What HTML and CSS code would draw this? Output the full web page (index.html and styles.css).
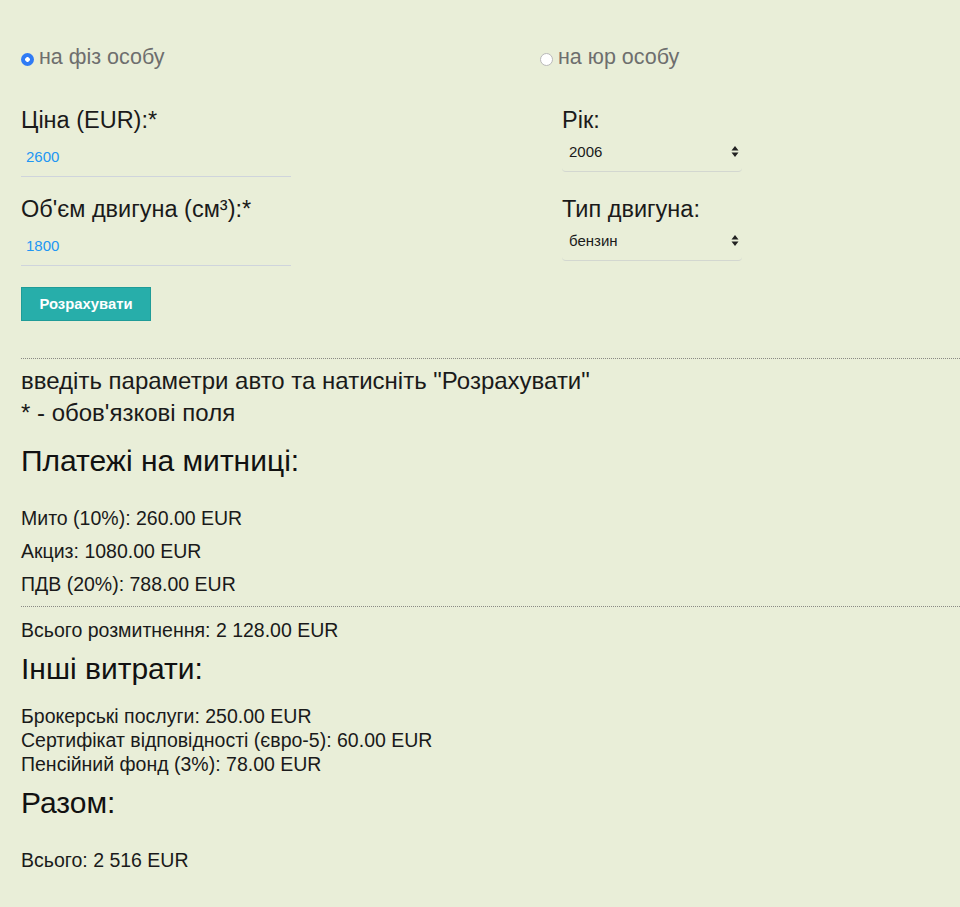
FILE: index.html
```html
<!DOCTYPE html>
<html lang="uk">
<head>
<meta charset="utf-8">
<title>Розмитнення авто</title>
<link rel="stylesheet" href="styles.css">
</head>
<body>
<div class="page">
  <div class="form-grid">
    <label class="radio"><input type="radio" name="who" checked><span>на фіз особу</span></label>
    <label class="radio"><input type="radio" name="who"><span>на юр особу</span></label>

    <div class="field">
      <div class="label">Ціна (EUR):*</div>
      <input class="text-input" type="text" value="2600">
    </div>
    <div class="field right">
      <div class="label">Рік:</div>
      <div class="select"><span>2006</span><span class="arrows"><svg width="8" height="13" viewBox="0 0 8 13"><path d="M4 1 L7.5 5.5 H0.5 Z M4 12 L0.5 7.5 H7.5 Z" fill="#222"/></svg></span></div>
    </div>

    <div class="field">
      <div class="label">Об'єм двигуна (см³):*</div>
      <input class="text-input" type="text" value="1800">
    </div>
    <div class="field right">
      <div class="label">Тип двигуна:</div>
      <div class="select"><span>бензин</span><span class="arrows"><svg width="8" height="13" viewBox="0 0 8 13"><path d="M4 1 L7.5 5.5 H0.5 Z M4 12 L0.5 7.5 H7.5 Z" fill="#222"/></svg></span></div>
    </div>
  </div>

  <button class="btn" type="button">Розрахувати</button>

  <div class="dotted first"></div>
  <p class="hint">введіть параметри авто та натисніть "Розрахувати"</p>
  <p class="hint">* - обов'язкові поля</p>

  <h2 class="h h-customs">Платежі на митниці:</h2>
  <div class="item">Мито (10%): 260.00 EUR</div>
  <div class="item">Акциз: 1080.00 EUR</div>
  <div class="item">ПДВ (20%): 788.00 EUR</div>
  <div class="dotted second"></div>
  <div class="line total-customs">Всього розмитнення: 2 128.00 EUR</div>

  <h2 class="h h-other">Інші витрати:</h2>
  <div class="line">Брокерські послуги: 250.00 EUR</div>
  <div class="line">Сертифікат відповідності (євро-5): 60.00 EUR</div>
  <div class="line">Пенсійний фонд (3%): 78.00 EUR</div>

  <h2 class="h h-sum">Разом:</h2>
  <div class="line">Всього: 2 516 EUR</div>
</div>
</body>
</html>
```

FILE: styles.css
```css
* { box-sizing: border-box; }
html, body {
  margin: 0;
  background: #e9eed8;
}
body {
  font-family: "Liberation Sans", Arial, sans-serif;
  color: #1a1a1a;
}
.page {
  padding: 45px 0 40px 21px;
}
.form-grid {
  display: grid;
  grid-template-columns: 519px 1fr;
  row-gap: 20px;
}
.radio {
  display: flex;
  align-items: center;
  font-size: 21.5px;
  line-height: 24px;
  color: #6e6e6e;
  margin-bottom: 19px;
}
.radio input {
  appearance: none;
  -webkit-appearance: none;
  width: 13px;
  height: 13px;
  margin: 4px 5px 0 0;
  border-radius: 50%;
  border: 1px solid #b9b9b9;
  background: #fff;
}
.radio input:checked {
  border: none;
  background: radial-gradient(circle, #fff 0 2px, #2f7bf5 2.6px);
}
.field {
  display: flex;
  flex-direction: column;
}
.field.right {
  padding-left: 22px;
}
.label {
  font-size: 23.5px;
  line-height: 24px;
  color: #1a1a1a;
  margin-bottom: 8px;
}
.text-input {
  width: 270px;
  height: 37px;
  border: none;
  border-bottom: 1px solid #cfd4dc;
  background: transparent;
  font-family: "Liberation Sans", Arial, sans-serif;
  font-size: 15px;
  color: #2196f3;
  padding: 0 5px 4px;
  outline: none;
}
.select {
  width: 180px;
  height: 36px;
  margin-top: -4px;
  display: flex;
  align-items: center;
  justify-content: space-between;
  padding: 0 3px 5px 7px;
  border-bottom: 1px solid #d3d7d0;
  border-radius: 0 0 4px 4px;
  font-size: 15px;
  color: #1a1a1a;
}
.arrows {
  display: flex;
  align-items: center;
}
.arrows svg { display: block; }
.btn {
  display: block;
  margin-top: 21px;
  width: 130px;
  height: 34px;
  background: #27aeaa;
  border: 1px solid #1f9c98;
  color: #fff;
  font-family: "Liberation Sans", Arial, sans-serif;
  font-weight: bold;
  font-size: 14.8px;
  padding: 0;
}
.dotted {
  border-top: 1px dotted #8a8a84;
}
.dotted.first {
  margin-top: 37px;
  margin-bottom: 6px;
}
.hint {
  margin: 0;
  font-size: 24px;
  line-height: 32px;
}
.h {
  margin: 0;
  font-weight: normal;
  font-size: 30px;
  line-height: 32px;
  color: #111;
}
.h-customs { margin-top: 16px; margin-bottom: 25px; }
.item {
  font-size: 19.5px;
  line-height: 33px;
}
.dotted.second {
  margin-top: 5px;
  margin-bottom: 11px;
}
.line {
  font-size: 19.5px;
  line-height: 24px;
}
.h-other { margin-top: 11px; margin-bottom: 19px; }
.h-sum { margin-top: 11px; margin-bottom: 29px; }
```
